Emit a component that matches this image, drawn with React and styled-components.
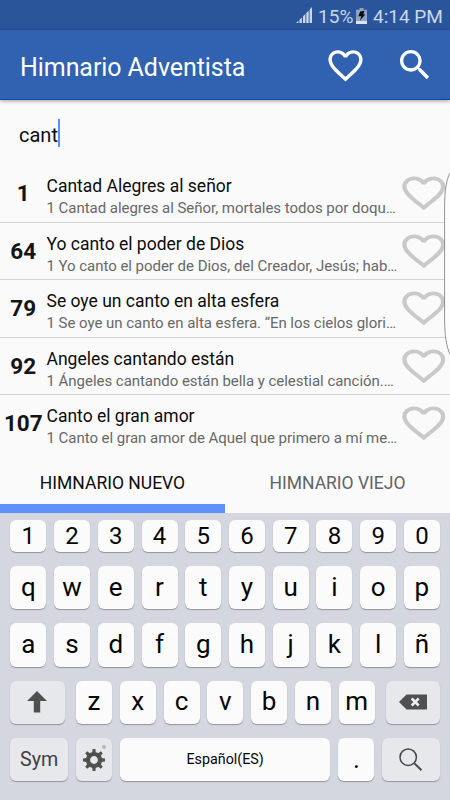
import React from "react";
import styled, { createGlobalStyle } from "styled-components";

const Global = createGlobalStyle`
  * { box-sizing: border-box; }
  body { margin: 0; background: #fafafa; font-family: Roboto, sans-serif; overflow: hidden; }
`;

const Screen = styled.div`
  position: relative;
  width: 450px;
  height: 800px;
  display: flex;
  flex-direction: column;
  background: #fafafa;
  overflow: hidden;
  color: #0c0c0c;
`;

const StatusBar = styled.div`
  height: 30px;
  flex: none;
  display: flex;
  align-items: center;
  justify-content: flex-end;
  padding: 3px 8px 0 0;
  background: #2b559b;
  color: #ccd7ea;
  font-size: 19px;
  line-height: 26px;
`;

const SignalIcon = styled.svg`
  width: 17px;
  height: 16px;
  margin: 0 5px 3px 0;
`;

const BatteryIcon = styled.svg`
  width: 11px;
  height: 16px;
  margin: 0 6px 1px 3px;
`;

const StatusText = styled.span`
  width: ${(p) => p.$width}px;
  white-space: nowrap;
  letter-spacing: ${(p) => p.$spacing || 0}px;
`;

const AppBar = styled.header`
  height: 70px;
  flex: none;
  display: flex;
  align-items: center;
  padding: 5px 15px 0 20px;
  background: #3161b1;
  border-bottom: 1px solid #0c4ca5;
  box-shadow: 0 1px 4px rgba(0, 0, 0, 0.38);
  color: #fff;
`;

const Title = styled.h1`
  flex: 1;
  margin: 0;
  padding-top: 2px;
  font-size: 25px;
  font-weight: 400;
  line-height: 34px;
  letter-spacing: -0.07px;
`;

const BarIcon = styled.svg`
  width: ${(p) => p.$size}px;
  height: ${(p) => p.$size}px;
  margin-right: ${(p) => p.$gap || 0}px;
  margin-top: -4px;
  fill: #fff;
`;

const SearchField = styled.div`
  height: 65px;
  flex: none;
  display: flex;
  align-items: flex-start;
  padding: 19px 0 0 19px;
  font-size: 20px;
  line-height: 32px;
`;

const Query = styled.span`
  width: 39px;
`;

const Caret = styled.span`
  width: 2px;
  height: 28px;
  background: #5c8ffc;
`;

const List = styled.div`
  height: 287px;
  flex: none;
  display: flex;
  flex-direction: column;
`;

const Row = styled.div`
  height: 57.5px;
  flex: none;
  display: grid;
  grid-template-columns: 46.5px 350px 1fr;
  border-bottom: ${(p) => (p.$last ? "none" : "1px solid #d3d3d3")};
`;

const Number = styled.div`
  text-align: center;
  font-size: 22.5px;
  font-weight: 700;
  line-height: 30px;
  padding-top: 13px;
  color: #141414;
`;

const SongTitle = styled.div`
  padding-top: 9px;
  font-size: 17.5px;
  line-height: 24px;
  white-space: nowrap;
`;

const Excerpt = styled.div`
  font-size: 15px;
  line-height: 20px;
  letter-spacing: -0.035px;
  white-space: nowrap;
  color: #686868;
`;

const RowHeart = styled.svg`
  width: 51.6px;
  height: 44px;
  margin: 6px 0 0 1.8px;
  fill: #c9c9c9;
`;

const EdgePanel = styled.svg`
  position: absolute;
  left: 443px;
  top: 170px;
  width: 7px;
  height: 186px;
`;

const Tabs = styled.div`
  height: 60.5px;
  flex: none;
  display: grid;
  grid-template-columns: 1fr 1fr;
`;

const Tab = styled.div`
  display: flex;
  align-items: center;
  justify-content: center;
  padding-top: ${(p) => (p.$active ? 11 : 2)}px;
  font-size: 17.5px;
  border-bottom: ${(p) => (p.$active ? "9px solid #6090fb" : "none")};
  color: ${(p) => (p.$active ? "#0c0c0c" : "#636363")};
`;

const Keyboard = styled.div`
  flex: 1;
  display: flex;
  flex-direction: column;
  gap: 14px;
  padding: 7.5px 10px 0 10.3px;
  background: #d4d7df;
`;

const KeyRow = styled.div`
  display: flex;
  justify-content: space-between;
  height: ${(p) => p.$height}px;
  flex: none;
`;

const KeyGroup = styled.div`
  display: flex;
  gap: 7.8px;
`;

const Key = styled.div`
  width: ${(p) => p.$width || 36}px;
  height: 100%;
  flex: none;
  position: relative;
  display: flex;
  align-items: center;
  justify-content: center;
  padding-bottom: ${(p) => p.$lift || 0}px;
  border-radius: 6px;
  background: ${(p) => (p.$muted ? "#e6e8ec" : "#fbfbfb")};
  box-shadow: 0 1px 1px rgba(80, 84, 95, 0.5);
  font-size: ${(p) => p.$font || 26}px;
  line-height: 1;
  color: ${(p) => (p.$muted ? "#404040" : "#050505")};
`;

const KeyIcon = styled.svg`
  width: ${(p) => p.$w}px;
  height: ${(p) => p.$h}px;
`;

const Dot = styled.span`
  position: absolute;
  top: 7px;
  right: 6px;
  width: 4px;
  height: 4px;
  border-radius: 50%;
  background: #b4b6ba;
`;

const HEART =
  "M16.5 3c-1.74 0-3.41.81-4.5 2.09C10.91 3.81 9.24 3 7.5 3 4.42 3 2 5.42 2 8.5c0 3.78 3.4 6.86 8.55 11.54L12 21.35l1.45-1.32C18.6 15.36 22 12.28 22 8.5 22 5.42 19.58 3 16.5 3zm-4.4 15.55l-.1.1-.1-.1C7.14 14.24 4 11.39 4 8.5 4 6.5 5.5 5 7.5 5c1.54 0 3.04.99 3.57 2.36h1.87C13.46 5.99 14.96 5 16.5 5c2 0 3.5 1.5 3.5 3.5 0 2.89-3.14 5.74-7.9 10.05z";
const SEARCH =
  "M15.5 14h-.79l-.28-.27C15.41 12.59 16 11.11 16 9.5 16 5.91 13.09 3 9.5 3S3 5.91 3 9.5 5.91 16 9.5 16c1.61 0 3.09-.59 4.23-1.57l.27.28v.79l5 4.99L20.49 19l-4.99-5zm-6 0C7.01 14 5 11.99 5 9.5S7.01 5 9.5 5 14 7.01 14 9.5 11.99 14 9.5 14z";

const SONGS = [
  ["1", "Cantad Alegres al señor", "1 Cantad alegres al Señor, mortales todos por doqu…"],
  ["64", "Yo canto el poder de Dios", "1 Yo canto el poder de Dios, del Creador, Jesús; hab…"],
  ["79", "Se oye un canto en alta esfera", "1 Se oye un canto en alta esfera. “En los cielos glori…"],
  ["92", "Angeles cantando están", "1 Ángeles cantando están bella y celestial canción.…"],
  ["107", "Canto el gran amor", "1 Canto el gran amor de Aquel que primero a mí me…"],
];

const TEETH = [0, 45, 90, 135, 180, 225, 270, 315];

export default function App() {
  return (
    <>
      <Global />
      <Screen>
        <StatusBar>
          <SignalIcon viewBox="0 0 17 16">
            <path d="M0 16h2.4v-2.2zM3.5 16h2.4V10.5L3.5 12.7zM7 16h2.4V7L7 9.3zM10.3 16h2.4V3.7l-2.4 2.4zM13.6 16H16V0l-2.4 2.7z" fill="#ccd7ea" />
          </SignalIcon>
          <StatusText $width={35} $spacing={0.1}>15%</StatusText>
          <BatteryIcon viewBox="0 0 11 16">
            <path d="M3.5 0h4v1.8H11V16H0V1.8h3.5z" fill="#8fa3c7" />
            <path d="M0 13h11v3H0z" fill="#dce4f1" />
            <path d="M4.2 3.5l4.3-.7-1.2 3.6h2L4 12.5l1.2-4.3H2.3z" fill="#080b12" />
          </BatteryIcon>
          <StatusText $width={69}>4:14 PM</StatusText>
        </StatusBar>
        <AppBar>
          <Title>Himnario Adventista</Title>
          <BarIcon $size={41} $gap={29.5} viewBox="0 0 24 24"><path d={HEART} /></BarIcon>
          <BarIcon $size={40} viewBox="0 0 24 24"><path d={SEARCH} /></BarIcon>
        </AppBar>
        <SearchField>
          <Query>cant</Query>
          <Caret />
        </SearchField>
        <List>
          {SONGS.map(([n, title, text], i) => (
            <Row key={n} $last={i === SONGS.length - 1}>
              <Number>{n}</Number>
              <div>
                <SongTitle>{title}</SongTitle>
                <Excerpt>{text}</Excerpt>
              </div>
              <RowHeart viewBox="0 0 24 24" preserveAspectRatio="none"><path d={HEART} /></RowHeart>
            </Row>
          ))}
        </List>
        <Tabs>
          <Tab $active>HIMNARIO NUEVO</Tab>
          <Tab>HIMNARIO VIEJO</Tab>
        </Tabs>
        <Keyboard>
          <KeyRow $height={32}>
            {[..."1234567890"].map((k) => <Key key={k} $font={24}>{k}</Key>)}
          </KeyRow>
          <KeyRow $height={43.3}>
            {[..."qwertyuiop"].map((k) => <Key key={k} $lift={1.5}>{k}</Key>)}
          </KeyRow>
          <KeyRow $height={43.3}>
            {[..."asdfghjklñ"].map((k) => <Key key={k} $lift={1}>{k}</Key>)}
          </KeyRow>
          <KeyRow $height={43.3}>
            <Key $width={54.3} $muted>
              <KeyIcon $w={20} $h={22} viewBox="0 0 20 22">
                <path d="M10 0l10 10h-6.8v11.5H6.8V10H0z" fill="#505050" />
              </KeyIcon>
            </Key>
            <KeyGroup>
              {[..."zxcvbnm"].map((k) => <Key key={k} $lift={1.5}>{k}</Key>)}
            </KeyGroup>
            <Key $width={54} $muted>
              <KeyIcon $w={28} $h={16} viewBox="0 0 28 16">
                <path d="M0 8l7.5-7.5H28v15H7.5z" fill="#505050" />
                <path d="M12.7 4.5l7 7M19.7 4.5l-7 7" stroke="#eceef1" strokeWidth="2.5" />
              </KeyIcon>
            </Key>
          </KeyRow>
          <KeyRow $height={43.3}>
            <Key $width={57.7} $font={19.7} $muted>Sym</Key>
            <Key $muted>
              <KeyIcon $w={22} $h={22} viewBox="-11 -11 22 22">
                <circle r="6" fill="none" stroke="#505050" strokeWidth="4.2" />
                {TEETH.map((a) => (
                  <path key={a} d="M-1.9-7l.5-4h2.8l.5 4z" fill="#505050" transform={`rotate(${a})`} />
                ))}
              </KeyIcon>
              <Dot />
            </Key>
            <Key $width={210.7} $font={14.3}>Español(ES)</Key>
            <Key $lift={1}>.</Key>
            <Key $width={57.7} $muted>
              <KeyIcon $w={24} $h={24} viewBox="0 0 24 24">
                <path d="M15.3 15.3l7.2 7" fill="none" stroke="#484848" strokeWidth="1.9" />
                <circle cx="9.2" cy="9.2" r="8.2" fill="none" stroke="#484848" strokeWidth="1.5" />
              </KeyIcon>
            </Key>
          </KeyRow>
        </Keyboard>
        <EdgePanel viewBox="0 0 7 186">
          <path d="M7 3C3.5 9 1.6 20 1.6 38V148c0 18 1.9 29 5.4 36z" fill="#fdfdfd" />
          <path d="M7 3C3.5 9 1.6 20 1.6 38V148c0 18 1.9 29 5.4 36" fill="none" stroke="#777" strokeWidth="0.8" />
        </EdgePanel>
      </Screen>
    </>
  );
}
